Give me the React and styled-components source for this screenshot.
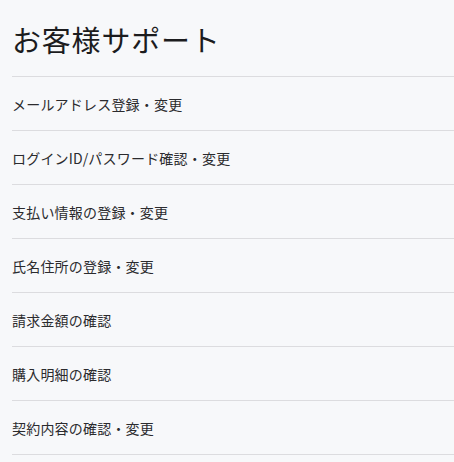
import React from "react";
import styled, { createGlobalStyle } from "styled-components";

const Global = createGlobalStyle`
  html, body { margin: 0; padding: 0; background: #f7f8fa; }
  body { font-family: "Noto Sans CJK JP", "Noto Sans", sans-serif; }
`;

const Page = styled.div`
  padding-left: 12px;
  background: #f7f8fa;
`;

const Title = styled.h1`
  margin: 0;
  height: 76px;
  display: flex;
  align-items: center;
  padding-top: 1px;
  box-sizing: border-box;
  font-size: 29px;
  font-weight: 400;
  color: #1c1c1e;
  letter-spacing: 0.8px;
`;

const List = styled.ul`
  list-style: none;
  margin: 0;
  padding: 0;
  border-top: 1px solid #dcdcdf;
`;

const Item = styled.li`
  height: 53px;
  display: flex;
  align-items: center;
  border-bottom: 1px solid #dcdcdf;
  font-size: 14px;
  letter-spacing: 0.2px;
  color: #2b2b2e;
`;

const items = [
  "メールアドレス登録・変更",
  "ログインID/パスワード確認・変更",
  "支払い情報の登録・変更",
  "氏名住所の登録・変更",
  "請求金額の確認",
  "購入明細の確認",
  "契約内容の確認・変更",
];

export default function App() {
  return (
    <>
      <Global />
      <Page>
        <Title>お客様サポート</Title>
        <List>
          {items.map((t) => (
            <Item key={t}>{t}</Item>
          ))}
        </List>
      </Page>
    </>
  );
}
